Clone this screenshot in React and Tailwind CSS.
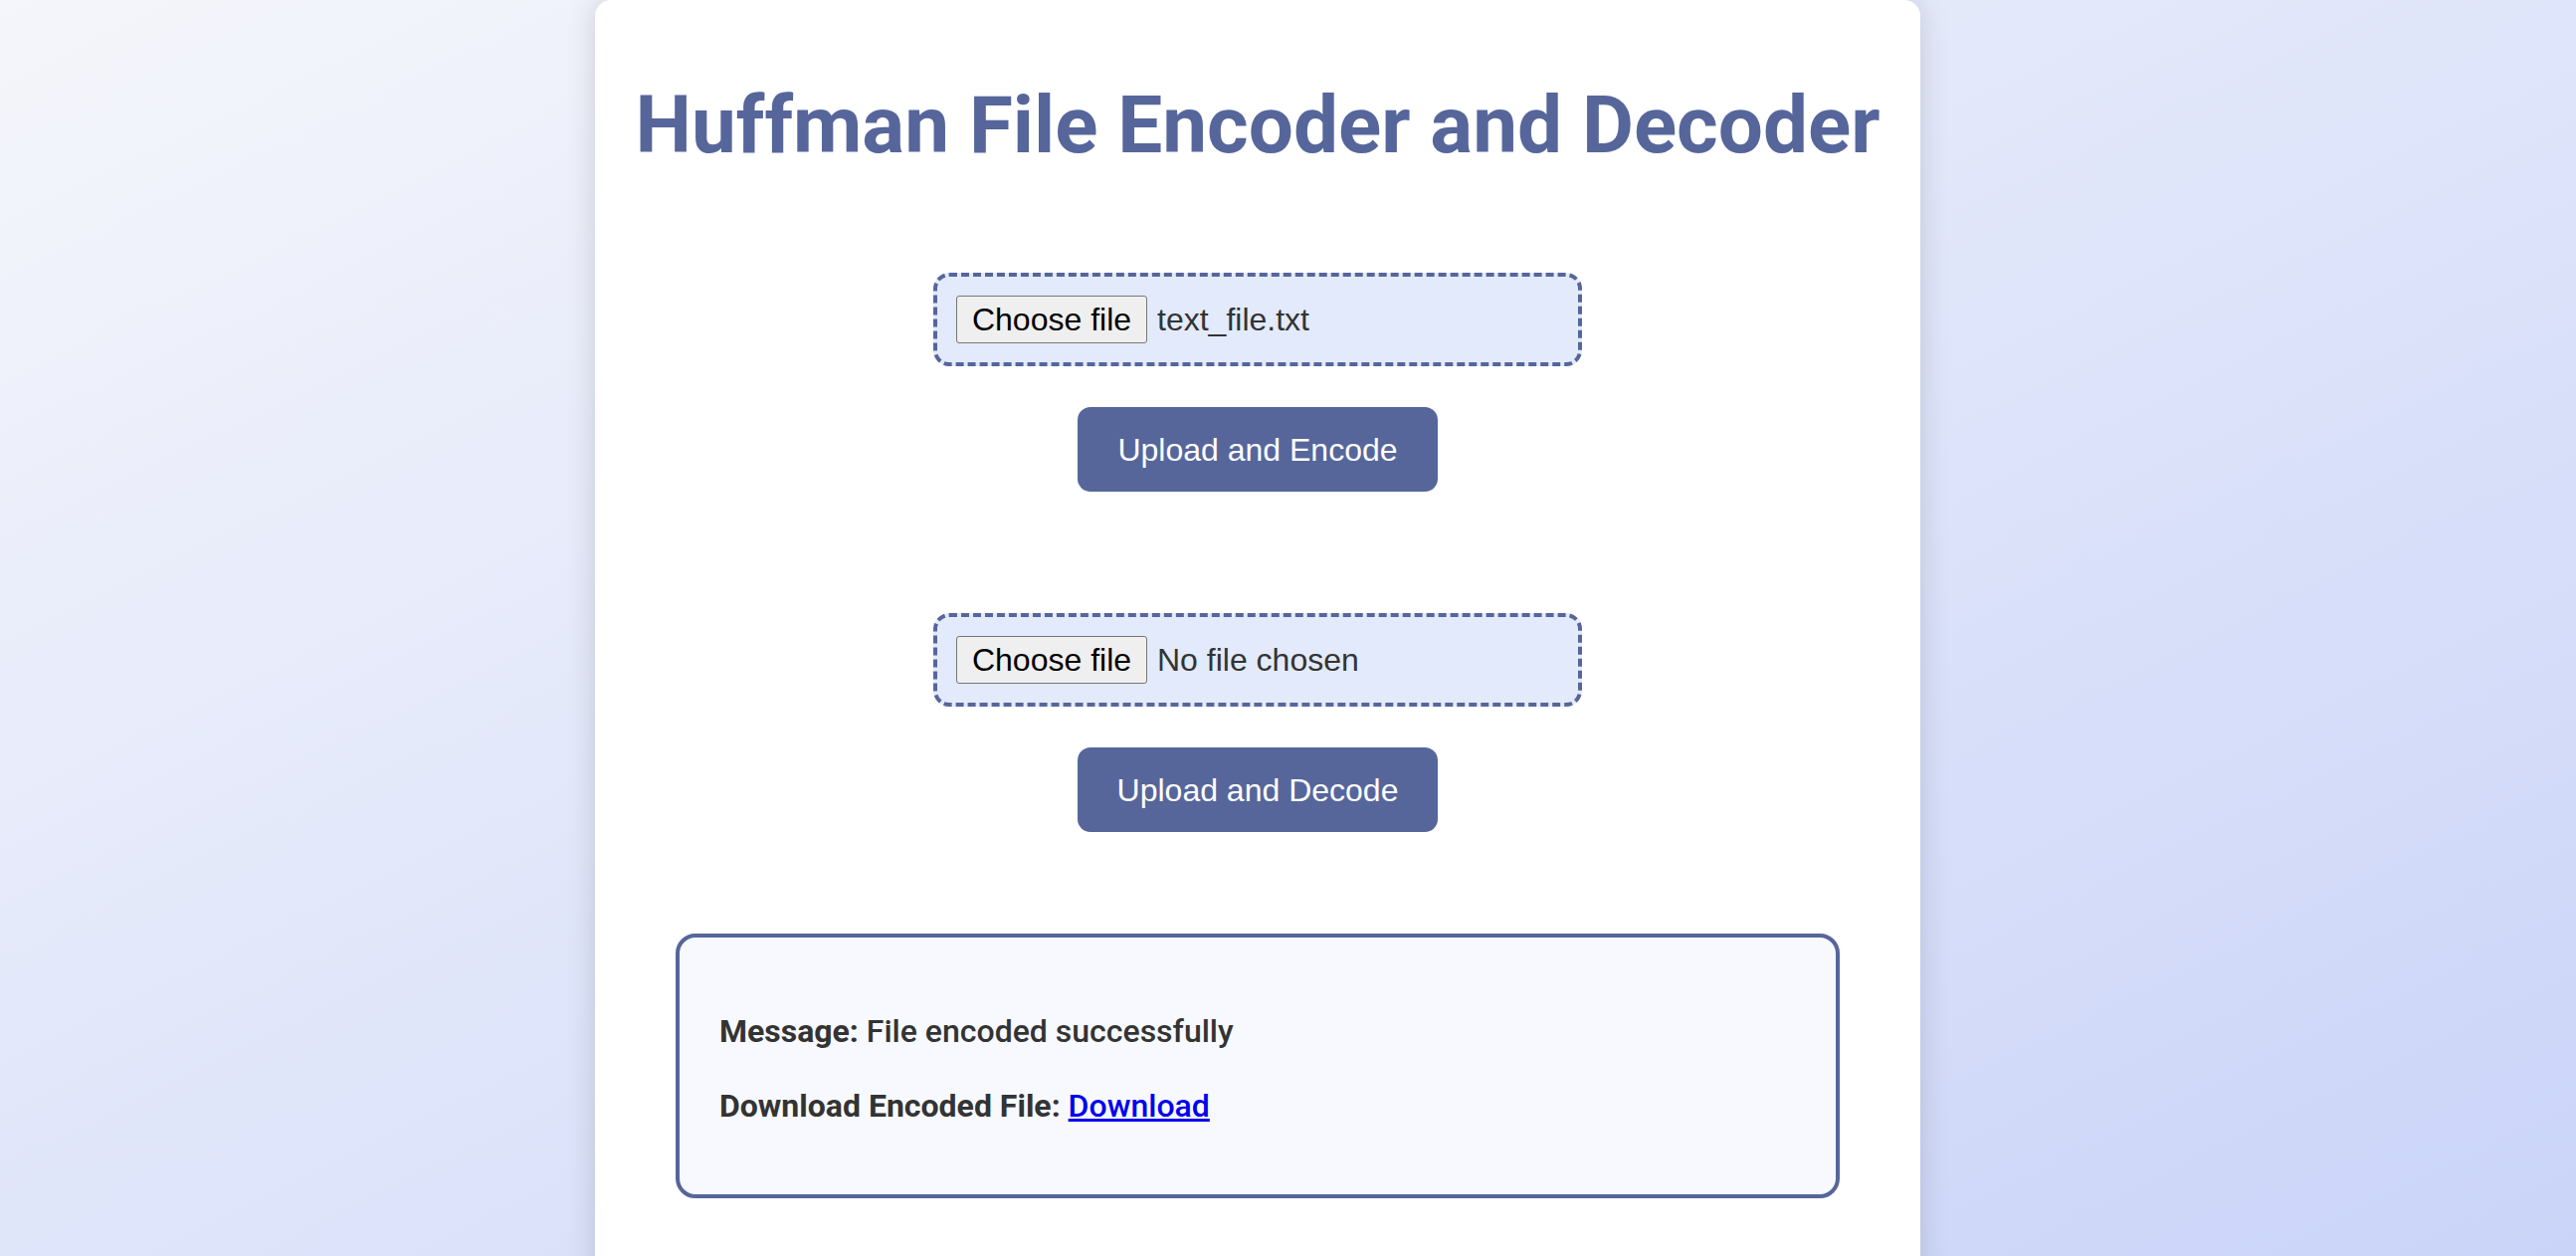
import React from 'react'

function FileBox({ fileName }){
  return (
    <div className="w-[652px] h-[94px] flex items-center px-[19px] border-4 border-dashed border-[#56669b] rounded-[16px] bg-[#e3eafb]">
      <div className="w-[192px] h-[48px] flex items-center justify-center bg-[#efefef] border border-[#767676] rounded-[3px] text-black text-[32px] font-['Liberation_Sans',Arial,sans-serif]">
        Choose file
      </div>
      <span className="ml-[10px] text-[32px] text-[#333] font-['Liberation_Sans',Arial,sans-serif]">{fileName}</span>
    </div>
  )
}

function UploadButton({ children }){
  return (
    <button className="w-[362px] h-[85px] rounded-[13px] bg-[#56669b] text-white text-[32px] font-['Liberation_Sans',Arial,sans-serif]">
      {children}
    </button>
  )
}

export default function App(){
  return (
    <div className="h-screen overflow-hidden bg-linear-to-br from-[#f5f6fb] to-[#cad4f8] font-['Roboto',sans-serif]">
      <div className="ml-[598px] w-[1332px] h-[1320px] bg-white rounded-[16px] shadow-[0_0_30px_rgba(0,0,0,0.15)] pt-[86px] flex flex-col items-center">
        <h1 className="text-[80px] leading-none font-bold text-[#56669b]">Huffman File Encoder and Decoder</h1>

        <div className="mt-[108px] flex flex-col items-center">
          <FileBox fileName="text_file.txt" />
          <div className="mt-[41px]"><UploadButton>Upload and Encode</UploadButton></div>
        </div>

        <div className="mt-[122px] flex flex-col items-center">
          <FileBox fileName="No file chosen" />
          <div className="mt-[41px]"><UploadButton>Upload and Decode</UploadButton></div>
        </div>

        <div className="mt-[102px] w-[1170px] h-[266px] border-4 border-[#56669b] rounded-[20px] bg-[#f7f9fe] px-[40px] pt-[74px] text-[32px] text-[#333] leading-[40px] font-medium">
          <p><strong className="font-bold">Message:</strong> File encoded successfully</p>
          <p className="mt-[35px]"><strong className="font-bold">Download Encoded File:</strong> <a href="#" className="text-[#0000ee] underline">Download</a></p>
        </div>
      </div>
    </div>
  )
}
